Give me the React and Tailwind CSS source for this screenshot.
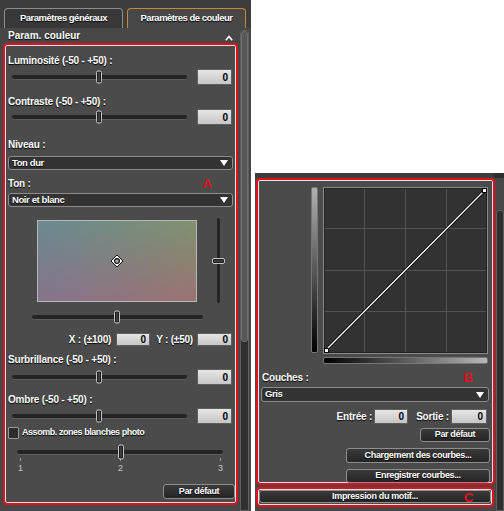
import React from 'react';

const FONT = "font-['Liberation_Sans',Arial,sans-serif]";
const SHADOW = '[text-shadow:0_1px_1px_#000]';

function Label({ children, className = '' }) {
  return (
    <div className={`flex items-center h-[14px] text-[10px] font-bold tracking-[-0.2px] text-white ${SHADOW} ${className}`}>
      {children}
    </div>
  );
}

function Slider({ pos, className = '', thumbH = 'h-[13px]' }) {
  return (
    <div className={`relative h-[4px] rounded-full bg-[#242424] shadow-[0_1px_0_#5c5c5c] ${className}`}>
      <div
        className={`absolute top-1/2 -translate-y-1/2 w-[6px] ${thumbH} rounded-[2px] border border-[#c4c4c4] bg-[#3c3c3c] shadow-[inset_0_0_0_1px_#1e1e1e]`}
        style={{ left: pos }}
      />
    </div>
  );
}

function NumBox({ className = '' }) {
  return (
    <div className={`flex items-center justify-end pr-[3px] border border-[#5e5e5e] bg-[linear-gradient(#e6e6e6,#c6c6c6)] text-black text-[10px] font-bold ${className}`}>
      0
    </div>
  );
}

function Select({ label, className = '' }) {
  return (
    <div className={`flex items-center justify-between rounded-[3px] border border-[#8c8c8c] bg-[#333333] pl-[3px] pr-[4px] ${className}`}>
      <span className={`text-[9.5px] font-bold tracking-[-0.4px] text-white ${SHADOW}`}>{label}</span>
      <svg width="8" height="6" viewBox="0 0 8 6">
        <path d="M0 0H8L4 6Z" fill="#fff" />
      </svg>
    </div>
  );
}

function Btn({ children, className = '' }) {
  return (
    <div className={`flex items-center justify-center rounded-[3px] border border-[#8e8e8e] bg-[linear-gradient(#3a3a3a,#252525)] text-white text-[9px] font-bold tracking-[-0.35px] ${SHADOW} ${className}`}>
      {children}
    </div>
  );
}

function SliderRow({ className = '' }) {
  return (
    <div className={`flex items-center h-[16px] ${className}`}>
      <Slider pos={84} className="ml-[7px] w-[175px]" />
      <NumBox className="ml-[10px] w-[35px] h-[16px]" />
    </div>
  );
}

function ColorField() {
  return (
    <svg width="160" height="82" viewBox="0 0 160 82" className="block">
      <defs>
        <linearGradient id="top" x1="0" x2="1" y1="0" y2="0">
          <stop offset="0" stopColor="#6a8a92" />
          <stop offset="1" stopColor="#80926f" />
        </linearGradient>
        <linearGradient id="bot" x1="0" x2="1" y1="0" y2="0">
          <stop offset="0" stopColor="#86738c" />
          <stop offset="1" stopColor="#9c7272" />
        </linearGradient>
        <linearGradient id="fade" x1="0" x2="0" y1="0" y2="1">
          <stop offset="0" stopColor="#fff" stopOpacity="0" />
          <stop offset="1" stopColor="#fff" stopOpacity="1" />
        </linearGradient>
        <mask id="m">
          <rect width="160" height="82" fill="url(#fade)" />
        </mask>
      </defs>
      <rect width="160" height="82" fill="url(#top)" />
      <rect width="160" height="82" fill="url(#bot)" mask="url(#m)" />
      <rect x="0.5" y="0.5" width="159" height="81" fill="none" stroke="#b8b8b8" />
      <g transform="translate(80 41)">
        <path d="M0 -6L6 0L0 6L-6 0Z" fill="#fff" stroke="#111" strokeWidth="1" />
        <circle r="3" fill="#111" />
        <circle r="1.6" fill="#fff" />
        <circle r="0.7" fill="#111" />
      </g>
    </svg>
  );
}

function CurveGraph() {
  return (
    <svg width="165" height="167" viewBox="0 0 165 167" className="block">
      <rect x="0.5" y="0.5" width="164" height="166" fill="#323232" stroke="#8a8a8a" />
      <rect x="1.5" y="1.5" width="162" height="164" fill="none" stroke="#222" />
      {[41, 82, 123].map((v) => (
        <line key={'v' + v} x1={v + 0.5} y1="2" x2={v + 0.5} y2="165" stroke="#525252" />
      ))}
      {[41, 83, 124].map((v) => (
        <line key={'h' + v} x1="2" y1={v + 0.5} x2="163" y2={v + 0.5} stroke="#525252" />
      ))}
      <line x1="3" y1="163" x2="162" y2="3" stroke="#000" strokeWidth="3" />
      <line x1="3" y1="163" x2="162" y2="3" stroke="#fff" strokeWidth="1.3" />
      <rect x="1.5" y="161.5" width="4" height="4" fill="#fff" stroke="#000" />
      <rect x="159.5" y="1.5" width="4" height="4" fill="#fff" stroke="#000" />
    </svg>
  );
}

function RedBox({ children, className = '' }) {
  return (
    <div className={`rounded-[4px] border-2 border-[#e3101c] shadow-[inset_0_0_0_1px_rgba(255,255,255,0.85)] bg-[#4b4b4b] ${className}`}>
      {children}
    </div>
  );
}

function LeftPanel() {
  return (
    <div className="w-[251px] h-[511px] bg-[#474747] flex flex-col shrink-0">
      {/* tabs */}
      <div className="h-[28px] bg-[#3d3d3d] flex items-end gap-[4px] pl-[4px]">
        <div className={`w-[119px] h-[20px] rounded-t-[4px] border border-b-0 border-[#8c8c8c] bg-[#383838] flex items-center justify-center text-[9.5px] font-bold tracking-[-0.5px] text-white ${SHADOW}`}>
          Paramètres généraux
        </div>
        <div className={`w-[119px] h-[20px] rounded-t-[4px] border border-b-0 border-[#c98a2e] bg-[#474747] flex items-center justify-center text-[9.5px] font-bold tracking-[-0.5px] text-white ${SHADOW}`}>
          Paramètres de couleur
        </div>
      </div>

      <div className="flex flex-1">
        <div className="w-[240px] flex flex-col">
          <div className="h-[15px] flex items-center justify-between pl-[8px] pr-[7px]">
            <span className={`text-[10px] font-bold text-white ${SHADOW}`}>Param. couleur</span>
            <svg width="8" height="6" viewBox="0 0 8 6" className="mt-[4px]">
              <path d="M0.8 5.2L4 1.5L7.2 5.2" fill="none" stroke="#fff" strokeWidth="1.6" />
            </svg>
          </div>

          <RedBox className="ml-[3px] w-[235px] h-[462px] flex flex-col">
            <Label className="mt-[8px] ml-[3px]">Luminosité (-50 - +50) :</Label>
            <SliderRow className="mt-[2px]" />
            <Label className="mt-[9px] ml-[3px]">Contraste (-50 - +50) :</Label>
            <SliderRow className="mt-[1px]" />

            <Label className="mt-[12px] ml-[3px]">Niveau :</Label>
            <Select label="Ton dur" className="mt-[5px] ml-[3px] w-[225px] h-[14px]" />
            <div className="mt-[6px] flex items-center justify-between pr-[24px]">
              <Label className="ml-[3px]">Ton :</Label>
              <span className="text-[13px] font-black text-[#e3101c] leading-none">A</span>
            </div>
            <Select label="Noir et blanc" className="mt-[3px] ml-[3px] w-[225px] h-[14px]" />

            <div className="mt-[11px] h-[86px] flex items-start">
              <div className="ml-[32px] mt-[2px]">
                <ColorField />
              </div>
              <div className="ml-[15px] w-[13px] h-[85px] flex justify-center relative">
                <div className="w-[3px] h-full bg-[#242424] rounded-full" />
                <div className="absolute left-0 top-[40px] w-[13px] h-[6px] rounded-[2px] border border-[#c4c4c4] bg-[#3c3c3c] shadow-[inset_0_0_0_1px_#1e1e1e]" />
              </div>
            </div>

            <div className="mt-[6px] h-[14px] flex items-center">
              <Slider pos={82} className="ml-[27px] w-[171px]" />
            </div>

            <div className="mt-[8px] h-[14px] flex items-center justify-end pr-[4px]">
              <Label>X : (±100)</Label>
              <NumBox className="ml-[5px] w-[34px] h-[13px]" />
              <Label className="ml-[6px]">Y : (±50)</Label>
              <NumBox className="ml-[4px] w-[35px] h-[13px]" />
            </div>

            <Label className="mt-[6px] ml-[3px]">Surbrillance (-50 - +50) :</Label>
            <SliderRow className="mt-[3px]" />
            <Label className="mt-[7px] ml-[3px]">Ombre (-50 - +50) :</Label>
            <SliderRow className="mt-[2px]" />

            <div className="mt-[2px] h-[14px] flex items-center">
              <div className="ml-[3px] w-[11px] h-[12px] rounded-[1px] border border-[#9a9a9a] bg-[#2c2c2c]" />
              <span className={`ml-[3px] text-[9px] font-bold tracking-[-0.45px] text-white ${SHADOW}`}>
                Assomb. zones blanches photo
              </span>
            </div>

            <div className="mt-[5px] h-[13px] flex items-center">
              <Slider pos={101} className="ml-[12px] w-[206px]" thumbH="h-[15px]" />
            </div>
            <div className="ml-[15px] w-[201px] h-[4px] flex justify-between">
              <div className="w-px h-[3px] bg-[#9a9a9a]" />
              <div className="w-px h-[3px] bg-[#9a9a9a]" />
              <div className="w-px h-[3px] bg-[#9a9a9a]" />
            </div>
            <div className="mt-[1px] ml-[13px] w-[205px] h-[12px] flex justify-between items-center text-[9px] text-[#c8c8c8]">
              <span className="w-[5px] text-center">1</span>
              <span className="w-[5px] text-center">2</span>
              <span className="w-[5px] text-center">3</span>
            </div>

            <Btn className="mt-[9px] ml-auto mr-[1px] w-[72px] h-[15px]">Par défaut</Btn>
          </RedBox>
        </div>

        {/* scrollbar */}
        <div className="mt-[2px] w-[9px] flex flex-col bg-[#2f2f2f] rounded-t-[3px] border border-[#5e5e5e]">
          <div className="h-[311px] rounded-[3px] bg-[#575757] border border-[#707070]" />
        </div>
      </div>
    </div>
  );
}

function RightPanel() {
  return (
    <div className="mt-[173px] w-[249px] h-[338px] bg-[#474747] flex flex-col shrink-0">
      <div className="h-[5px] bg-[#3d3d3d] flex justify-end">
        <div className="w-[10px] h-full bg-[#2e2e2e]" />
      </div>
      <div className="flex flex-1">
        <div className="w-[240px] flex flex-col">
          <RedBox className="ml-[1px] w-[239px] h-[307px] flex flex-col">
            <div className="mt-[7px] h-[167px] flex">
              <div className="ml-[53px] w-[7px] h-[166px] rounded-[2px] border border-[#777] bg-[linear-gradient(#b0b0b0,#000)]" />
              <div className="ml-[5px]">
                <CurveGraph />
              </div>
            </div>
            <div className="mt-[3px] ml-[65px] w-[165px] h-[7px] rounded-[2px] border border-[#777] bg-[linear-gradient(to_right,#000,#b8b8b8)]" />

            <div className="mt-[6px] flex items-center justify-between pr-[20px]">
              <Label className="ml-[4px]">Couches :</Label>
              <span className="text-[13px] font-black text-[#e3101c] leading-none">B</span>
            </div>
            <Select label="Gris" className="mt-[3px] ml-[3px] w-[228px] h-[15px]" />

            <div className="mt-[7px] h-[15px] flex items-center justify-end pr-[6px]">
              <Label>Entrée :</Label>
              <NumBox className="ml-[2px] w-[34px] h-[15px]" />
              <Label className="ml-[8px]">Sortie :</Label>
              <NumBox className="ml-[2px] w-[36px] h-[15px]" />
            </div>

            <Btn className="mt-[4px] self-end mr-[3px] w-[70px] h-[14px]">Par défaut</Btn>
            <Btn className="mt-[6px] self-end mr-[3px] w-[144px] h-[15px]">Chargement des courbes...</Btn>
            <Btn className="mt-[6px] self-end mr-[3px] w-[144px] h-[14px]">Enregistrer courbes...</Btn>
          </RedBox>

          <RedBox className="relative mt-[2px] ml-[1px] w-[238px] h-[20px] flex">
            <Btn className="mt-[1px] ml-[1px] w-[232px] h-[13px]">Impression du motif...</Btn>
            <span className="absolute left-[206px] top-[2px] text-[13px] font-black text-[#e3101c] leading-none">C</span>
          </RedBox>
        </div>
        <div className="ml-[1px] mt-[32px] w-[8px] bg-[#2f2f2f] rounded-t-[3px] border border-[#5e5e5e]" />
      </div>
    </div>
  );
}

export default function App() {
  return (
    <div className={`w-[504px] h-[511px] bg-white flex gap-[4px] overflow-hidden ${FONT}`}>
      <LeftPanel />
      <RightPanel />
    </div>
  );
}
